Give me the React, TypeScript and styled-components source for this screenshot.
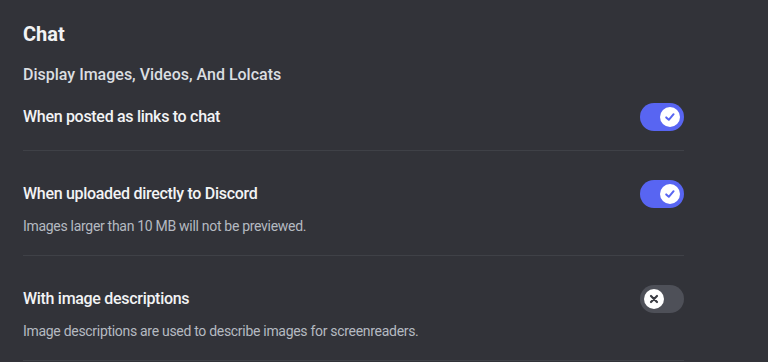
import React from "react";
import styled, { createGlobalStyle } from "styled-components";

const Global = createGlobalStyle`
  html, body { margin: 0; padding: 0; background: #323339; }
  body { font-family: Roboto, "Noto Sans", sans-serif; -webkit-font-smoothing: antialiased; }
`;

const Page = styled.div`
  width: 768px;
  height: 362px;
  overflow: hidden;
  background: #323339;
  box-sizing: border-box;
  padding: 22px 84px 0 23px;
`;

const SectionTitle = styled.h2`
  margin: 0 0 19px;
  font-size: 20px;
  line-height: 24px;
  font-weight: 700;
  color: #f2f3f5;
`;

const GroupTitle = styled.h3`
  margin: 0 0 18px;
  font-size: 16px;
  line-height: 20px;
  font-weight: 500;
  color: #dbdee1;
`;

const Item = styled.div`
  display: flex;
  flex-direction: column;
  padding-bottom: 19px;
  border-bottom: 1px solid #3f4147;
  & + & {
    margin-top: 29px;
  }
`;

const Row = styled.div`
  display: flex;
  align-items: center;
  justify-content: space-between;
  height: 28px;
`;

const Label = styled.span`
  font-size: 16px;
  line-height: 24px;
  font-weight: 500;
  letter-spacing: -0.3px;
  color: #f2f3f5;
`;

const Note = styled.div`
  margin-top: 8px;
  font-size: 14px;
  line-height: 20px;
  font-weight: 400;
  letter-spacing: -0.3px;
  color: #b5bac1;
`;

const Track = styled.div<{ $on: boolean }>`
  width: 44px;
  height: 28px;
  border-radius: 14px;
  background: ${(p) => (p.$on ? "#5865f2" : "#4e5058")};
  display: flex;
  align-items: center;
  justify-content: ${(p) => (p.$on ? "flex-end" : "flex-start")};
  padding: 0 4px;
  box-sizing: border-box;
`;

const Knob = styled.div`
  width: 20px;
  height: 20px;
  border-radius: 50%;
  background: #ffffff;
  display: flex;
  align-items: center;
  justify-content: center;
`;

function Toggle({ on }: { on: boolean }) {
  return (
    <Track $on={on}>
      <Knob>
        {on ? (
          <svg width="12" height="12" viewBox="0 0 12 12">
            <path d="M2.2 6.4 L4.8 8.8 L9.6 3.2" fill="none" stroke="#5865f2" strokeWidth="2" strokeLinecap="round" strokeLinejoin="round" />
          </svg>
        ) : (
          <svg width="12" height="12" viewBox="0 0 12 12">
            <path d="M3 3 L9 9 M9 3 L3 9" fill="none" stroke="#3a3c42" strokeWidth="2.2" strokeLinecap="round" />
          </svg>
        )}
      </Knob>
    </Track>
  );
}

const items = [
  { label: "When posted as links to chat", on: true },
  { label: "When uploaded directly to Discord", on: true, note: "Images larger than 10 MB will not be previewed." },
  { label: "With image descriptions", on: false, note: "Image descriptions are used to describe images for screenreaders." },
];

export default function App() {
  return (
    <Page>
      <Global />
      <SectionTitle>Chat</SectionTitle>
      <GroupTitle>Display Images, Videos, And Lolcats</GroupTitle>
      {items.map((it) => (
        <Item key={it.label}>
          <Row>
            <Label>{it.label}</Label>
            <Toggle on={it.on} />
          </Row>
          {it.note && <Note>{it.note}</Note>}
        </Item>
      ))}
    </Page>
  );
}
